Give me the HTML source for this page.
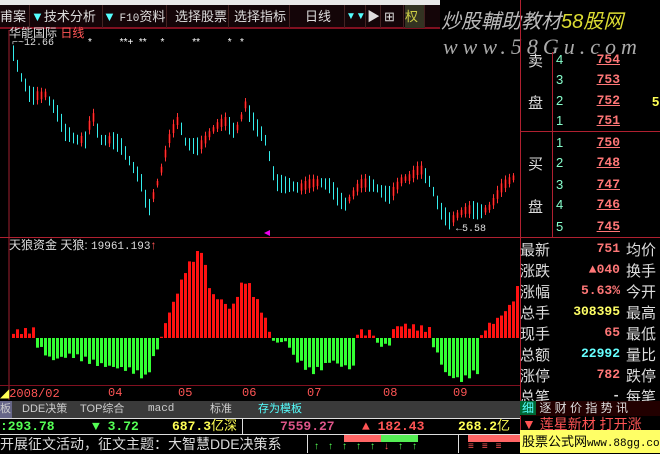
<!DOCTYPE html><html><head><meta charset="utf-8"><style>
*{margin:0;padding:0;box-sizing:border-box}
body{width:660px;height:453px;background:#000;overflow:hidden;position:relative;font-family:"Liberation Sans","Noto Sans CJK SC",sans-serif;color:#ddd}
.a{position:absolute;white-space:nowrap}
.tb{position:absolute;top:5px;height:23px;font-size:13px;line-height:23px;color:#ddd;border-right:1px solid #422;overflow:hidden}
.r{color:#f55}.y{color:#ff5}.c{color:#5ff}.g{color:#5f5}.w{color:#ddd}
.lab{font-size:15px;color:#ddd}
.num{font-size:13px;font-family:"Liberation Mono",monospace;font-weight:bold;text-align:right;width:70px}
</style></head><body>
<div class="a" style="left:0;top:0;width:440px;height:5px;background:#e8e8e8"></div>
<div class="a" style="left:0;top:5px;width:440px;height:23px;background:#140508"></div>
<div class="a" style="left:0;top:27px;width:440px;height:2px;background:#801020"></div>
<div class="tb" style="left:0;width:30px">甫案</div>
<div class="tb" style="left:31px;width:72px"><span class="c">▼</span>技术分析</div>
<div class="tb" style="left:103px;width:64px"><span class="c">▼</span> <span style="font-family:Liberation Mono;font-size:11px">F10</span>资料</div>
<div class="tb" style="left:171px;width:58px;padding-left:4px">选择股票</div>
<div class="tb" style="left:230px;width:60px;padding-left:4px">选择指标</div>
<div class="tb" style="left:305px;width:40px">日线</div>
<div class="tb" style="left:346px;width:20px;font-size:10px" ><span class="c">▼▼</span></div>
<div class="tb" style="left:367px;width:14px">▶</div>
<div class="tb" style="left:384px;width:20px">⊞</div>
<div class="tb" style="left:405px;width:20px;color:#cc4;background:#332">权</div>
<div class="a" style="left:441px;top:5px;font-size:20px;font-style:italic;color:#bbb">炒股輔助教材<span style="color:#dd3">58股网</span></div>
<div class="a" style="left:443px;top:34px;font-size:22px;font-style:italic;color:#aaa;letter-spacing:5px;font-family:'Liberation Serif'">www.58Gu.com</div>
<div class="a" style="left:9px;top:24px;font-size:12px">华能国际 <span class="r">日线</span></div>
<div class="a" style="left:12px;top:38px;font-size:10px;font-family:'Liberation Mono'">⌐~12.66</div>
<div class="a" style="left:88px;top:37px;font-size:10px;color:#fff">*&nbsp;&nbsp;&nbsp;&nbsp;&nbsp;&nbsp;&nbsp;&nbsp;&nbsp;&nbsp;**+&nbsp;&nbsp;**&nbsp;&nbsp;&nbsp;&nbsp;&nbsp;*&nbsp;&nbsp;&nbsp;&nbsp;&nbsp;&nbsp;&nbsp;&nbsp;&nbsp;&nbsp;**&nbsp;&nbsp;&nbsp;&nbsp;&nbsp;&nbsp;&nbsp;&nbsp;&nbsp;&nbsp;*&nbsp;&nbsp;&nbsp;*</div>
<svg class="a" style="left:0;top:0" width="520" height="453" id="sv">
<line x1="9" y1="30" x2="9" y2="400" stroke="#a02030"/>
<line x1="0" y1="237.5" x2="520" y2="237.5" stroke="#b02030"/>
<line x1="0" y1="385.5" x2="520" y2="385.5" stroke="#801020"/>
<polygon points="264,233 270,230 270,236" fill="#e0e"/>
</svg>
<div class="a" style="left:456px;top:224px;font-size:10px;font-family:'Liberation Mono'">←5.58</div>
<div class="a" style="left:9px;top:236px;font-size:12px">天狼资金 天狼: <span style="font-family:'Liberation Mono';font-size:11px">19961.193</span><span class="r">↑</span></div>
<div class="a r" style="left:0;top:386px;width:520px;height:15px;font-size:12px;font-family:'Liberation Mono'"><span class="y">◢</span>2008/02<span style="position:absolute;left:108px">04</span><span style="position:absolute;left:178px">05</span><span style="position:absolute;left:242px">06</span><span style="position:absolute;left:307px">07</span><span style="position:absolute;left:383px">08</span><span style="position:absolute;left:453px">09</span></div>
<div class="a" style="left:0;top:401px;width:520px;height:17px;background:#3a3a3a;font-size:11px;line-height:17px;color:#ccc">
<span style="position:absolute;left:0;background:#668;width:12px">板</span><span style="position:absolute;left:22px">DDE决策</span><span style="position:absolute;left:80px">TOP综合</span><span style="position:absolute;left:148px;font-family:'Liberation Mono'">macd</span><span style="position:absolute;left:210px">标准</span><span style="position:absolute;left:258px" class="c">存为模板</span></div>
<div class="a" style="left:0;top:418px;width:520px;height:17px;border-top:1px solid #ddd;border-bottom:1px solid #ddd;font-size:13px;font-weight:bold;line-height:16px;font-family:'Liberation Mono',monospace">
<span class="g" style="position:absolute;left:0">:293.78</span><span class="g" style="position:absolute;left:92px">▼ 3.72</span><span class="y" style="position:absolute;left:172px">687.3<span style="font-weight:normal">亿深</span></span>
<span style="position:absolute;left:242px;top:0;height:16px;border-left:1px solid #ddd"></span>
<span style="position:absolute;left:280px;color:#d58">7559.27</span><span class="r" style="position:absolute;left:362px">▲ 182.43</span><span class="y" style="position:absolute;left:458px">268.2<span style="font-weight:normal">亿</span></span></div>
<div class="a" style="left:0;top:434px;font-size:14px;color:#ddd">开展征文活动，征文主题：大智慧DDE决策系</div>
<div class="a" style="left:307px;top:435px;width:213px;height:18px;border-left:1px solid #ddd">
<div class="a" style="left:36px;top:0;width:37px;height:7px;background:#f66"></div><div class="a" style="left:73px;top:0;width:37px;height:7px;background:#5e5"></div>
<div class="a" style="left:150px;top:-1px;height:19px;border-left:1px solid #ddd"></div>
<div class="a" style="left:160px;top:0;width:53px;height:7px;background:#f66"></div>
<div class="a g" style="left:6px;top:6px;font-size:10px;letter-spacing:9px">↑↑↑↑↑<span class="r">↓</span>↑↑</div>
<div class="a r" style="left:160px;top:6px;font-size:10px;letter-spacing:8px">≡≡≡</div></div>
<div class="a" style="left:520px;top:0;width:1px;height:453px;background:#b02030"></div>
<div class="a" style="left:552px;top:52px;width:1px;height:185px;background:#b02030"></div>
<div class="a" style="left:520px;top:131px;width:140px;height:1px;background:#b02030"></div>
<div class="a" style="left:520px;top:237px;width:140px;height:1px;background:#b02030"></div>
<div class="a lab" style="left:528px;top:50px">卖</div><div class="a lab" style="left:528px;top:92px">盘</div>
<div class="a lab" style="left:528px;top:153px">买</div><div class="a lab" style="left:528px;top:196px">盘</div>
<div id="ob"></div>
<div class="a" style="left:520px;top:401px;width:140px;height:15px;font-size:12px;line-height:15px;color:#ddd;background:#200">
<span style="background:#063;color:#5ff;padding:0 2px">细</span> 逐 财 价 指 势 讯</div>
<div class="a r" style="left:522px;top:416px;font-size:14px;line-height:17px">▼ 莲星新材 打开涨</div>
<div class="a" style="left:520px;top:430px;width:140px;height:23px;background:#ff6;color:#000;font-size:13px;line-height:23px;padding-left:2px;overflow:hidden">股票公式网<span style="font-family:'Liberation Mono';font-size:11px">www.88gg.com</span></div>
<script>
var ob=document.getElementById('ob'),h='';
var sell=[[60,4,'754'],[80,3,'753'],[101,2,'752'],[121,1,'751']],buy=[[143,1,'750'],[163,2,'748'],[185,3,'747'],[205,4,'746'],[227,5,'745']];
sell.concat(buy).forEach(function(r){h+='<div class="a" style="left:556px;top:'+(r[0]-8)+'px;font-size:13px;color:#8fc">'+r[1]+'</div><div class="a num" style="left:550px;top:'+(r[0]-8)+'px;color:#f77;text-decoration:underline">'+r[2]+'</div>';});
h+='<div class="a y" style="left:652px;top:94px;font-size:13px;font-weight:bold">5</div>';
var st=[['最新','751','#f77','均价'],['涨跌','▲040','#f77','换手'],['涨幅','5.63%','#f77','今开'],['总手','308395','#ff6','最高'],['现手','65','#f77','最低'],['总额','22992','#6ff','量比'],['涨停','782','#f77','跌停'],['总笔','-','#ddd','每笔']];
st.forEach(function(s,i){var t=239+i*21;h+='<div class="a lab" style="left:520px;top:'+t+'px">'+s[0]+'</div><div class="a num" style="left:550px;top:'+(t+2)+'px;color:'+s[2]+'">'+s[1]+'</div><div class="a lab" style="left:626px;top:'+t+'px">'+s[3]+'</div>';});
ob.innerHTML=h;
var sv=document.getElementById('sv'),p='';
var kp=[[12,50],[20,80],[30,100],[45,90],[55,105],[65,135],[75,145],[85,140],[92,110],[100,135],[110,140],[120,150],[130,165],[140,175],[148,205],[160,175],[170,140],[178,122],[185,140],[200,142],[210,135],[225,125],[235,130],[245,100],[255,125],[265,145],[275,185],[290,180],[300,185],[315,188],[330,185],[345,200],[360,188],[375,188],[390,190],[400,180],[410,182],[420,172],[430,180],[440,205],[450,222],[460,218],[470,212],[480,208],[490,202],[500,190],[510,185],[516,180]];
function f(x){for(var i=1;i<kp.length;i++)if(x<=kp[i][0]){var a=kp[i-1],b=kp[i];return a[1]+(b[1]-a[1])*(x-a[0])/(b[0]-a[0]);}return 180;}
var prev=f(12);
for(var x=13;x<517;x+=4){var m=f(x)+Math.sin(x*1.7)*5;var up=m<prev;var hl=8+Math.abs(Math.sin(x*0.9))*10;
p+='<rect x="'+x+'" y="'+(m-hl/2)+'" width="1" height="'+hl+'" fill="'+(up?'#f33':'#3ee')+'"/>';
if(up)p+='<rect x="'+(x-1)+'" y="'+(m-hl/4)+'" width="3" height="'+(hl/2)+'" fill="#600"/><rect x="'+x+'" y="'+(m-hl/2)+'" width="1" height="'+hl+'" fill="#f33"/>';
prev=m;}
var hp=[[12,332],[35,330],[36,345],[50,360],[70,355],[100,365],[130,370],[145,378],[155,350],[160,338],[161,330],[175,295],[185,268],[195,255],[200,250],[205,272],[210,295],[220,300],[230,310],[240,285],[245,280],[250,290],[260,310],[268,330],[271,338],[272,342],[287,342],[290,355],[310,372],[320,368],[330,360],[340,366],[352,368],[355,338],[356,332],[372,333],[375,345],[388,345],[390,330],[400,325],[430,330],[432,345],[445,375],[460,380],[478,370],[480,338],[481,330],[495,320],[505,310],[512,300],[516,288]];
function g(x){for(var i=1;i<hp.length;i++)if(x<=hp[i][0]){var a=hp[i-1],b=hp[i];return a[1]+(b[1]-a[1])*(x-a[0])/(b[0]-a[0]);}return 338;}
for(var x=12;x<518;x+=4){var v=g(x)+Math.sin(x*2.3)*3;var z=338;if(v<z)p+='<rect x="'+x+'" y="'+v+'" width="3" height="'+(z-v)+'" fill="#f11"/>';else p+='<rect x="'+x+'" y="'+z+'" width="3" height="'+(v-z)+'" fill="#3f3"/>';}
sv.insertAdjacentHTML('beforeend',p);
</script>
</body></html>
